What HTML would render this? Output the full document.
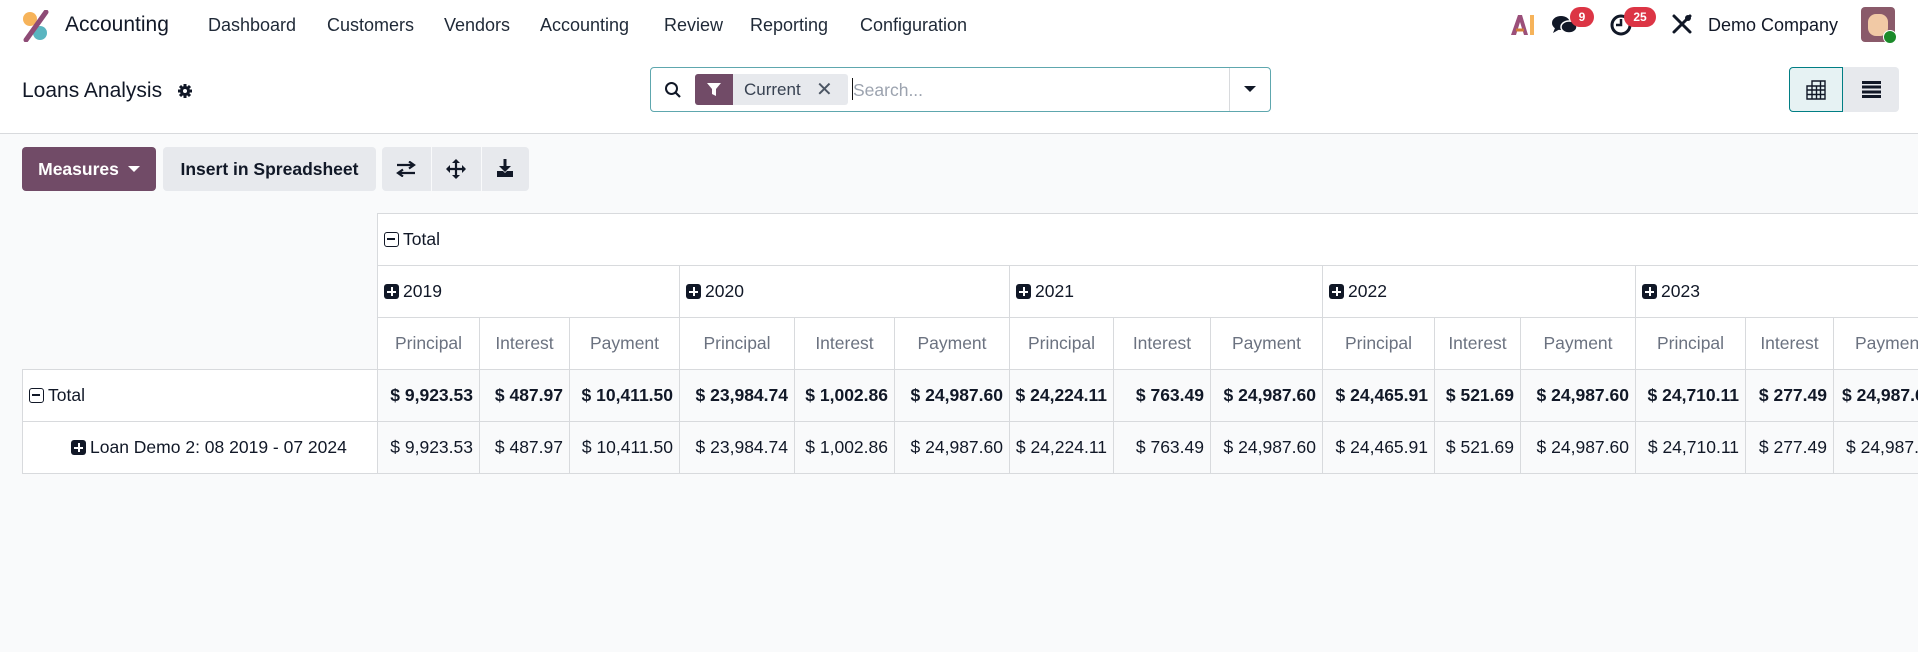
<!DOCTYPE html>
<html><head><meta charset="utf-8">
<style>
*{box-sizing:border-box;margin:0;padding:0}
body{width:1918px;height:652px;overflow:hidden;background:#f9fafb;font-family:"Liberation Sans",sans-serif;color:#111827;font-size:17.5px;position:relative}
.top{position:absolute;left:0;top:0;width:1918px;height:134px;background:#fff;border-bottom:1px solid #d8dadd}
.a{position:absolute;white-space:nowrap}
.nav{top:15px;font-size:18px;color:#1f2937}
.btn{position:absolute;border-radius:4px;background:#e7e9ed;display:flex;align-items:center;justify-content:center;font-weight:bold;font-size:17.5px}
table{position:absolute;left:22px;top:213px;border-collapse:collapse;table-layout:fixed;width:1920px}
td,th{border:1px solid #d8dadd;height:52px;white-space:nowrap;overflow:hidden;font-weight:normal;font-size:17.5px}
th{background:#fff;text-align:left;padding-left:6px}
th.m{text-align:center;color:#6b7280;padding:0}
td{text-align:right;padding-right:6px;background:#f9fafb}
tr.t td{font-weight:bold}
td.l{background:#fff;text-align:left;padding-left:6px;font-weight:normal!important}
.pl{display:inline-block;width:15px;height:15px;background:#111827;border-radius:3px;vertical-align:-2px;margin-right:4px;position:relative}
.pl:before{content:"";position:absolute;left:3px;top:6.5px;width:9px;height:2px;background:#fff}
.pl:after{content:"";position:absolute;left:6.5px;top:3px;width:2px;height:9px;background:#fff}
.mi{display:inline-block;width:15px;height:15px;border:1.5px solid #111827;border-radius:3px;vertical-align:-2px;margin-right:4px;position:relative}
.mi:before{content:"";position:absolute;left:2px;top:5.3px;width:8px;height:1.5px;background:#111827}
.badge{position:absolute;background:#dc3545;color:#fff;font-size:12px;font-weight:bold;border-radius:10px;height:20px;line-height:20px;text-align:center}
</style></head><body>
<div class="top"></div>
<svg class="a" style="left:20px;top:10px" width="32" height="32" viewBox="0 0 32 32">
<circle cx="10" cy="9" r="7" fill="#f6b35a"/><circle cx="20" cy="23" r="7" fill="#5ab5c0"/>
<path d="M6 30 L26 2" stroke="#8e4b76" stroke-width="5" stroke-linecap="round"/></svg>
<div class="a" style="left:65px;top:13px;font-size:21px;color:#111827">Accounting</div>
<div class="a nav" style="left:208px">Dashboard</div>
<div class="a nav" style="left:327px">Customers</div>
<div class="a nav" style="left:444px">Vendors</div>
<div class="a nav" style="left:540px">Accounting</div>
<div class="a nav" style="left:664px">Review</div>
<div class="a nav" style="left:750px">Reporting</div>
<div class="a nav" style="left:860px">Configuration</div>
<svg class="a" style="left:1510px;top:14px" width="26" height="22" viewBox="0 0 26 22"><path d="M1 21 L8 1 L12 1 L18 21 L14 21 L10 8 L6 21Z" fill="#9b4f7a"/><path d="M6 16 H14" stroke="#d07a3a" stroke-width="3"/><rect x="20" y="1" width="4" height="20" fill="#f6b35a"/></svg>
<svg class="a" style="left:1551px;top:14px" width="28" height="22" viewBox="0 0 28 22"><ellipse cx="10" cy="9" rx="9" ry="7" fill="#111827"/><path d="M4 14 L2 19 L9 15Z" fill="#111827"/><ellipse cx="18" cy="13" rx="8" ry="6" fill="#111827" stroke="#fff" stroke-width="1.5"/></svg>
<div class="badge" style="left:1570px;top:7px;width:24px">9</div>
<svg class="a" style="left:1609px;top:13px" width="24" height="24" viewBox="0 0 24 24"><circle cx="12" cy="12" r="9" fill="none" stroke="#111827" stroke-width="3"/><path d="M12 6 V12 H7" stroke="#111827" stroke-width="2.5" fill="none"/></svg>
<div class="badge" style="left:1624px;top:7px;width:32px">25</div>
<svg class="a" style="left:1671px;top:13px" width="22" height="22" viewBox="0 0 22 22"><path d="M3 19 L19 3 M3 3 L19 19" stroke="#111827" stroke-width="3" stroke-linecap="round"/><circle cx="17" cy="5" r="3" fill="#111827"/></svg>
<div class="a" style="left:1708px;top:15px;font-size:18px">Demo Company</div>
<div class="a" style="left:1861px;top:7px;width:34px;height:35px;border-radius:4px;background:#8a5a6a"></div>
<div class="a" style="left:1868px;top:14px;width:20px;height:22px;border-radius:8px;background:#f1c9a5"></div>
<div class="a" style="left:1883px;top:30px;width:14px;height:14px;border-radius:50%;background:#1b8a2a;border:1.5px solid #fff"></div>
<div class="a" style="left:22px;top:79px;font-size:21px">Loans Analysis</div>
<svg class="a" style="left:177px;top:83px" width="16" height="16" viewBox="0 0 16 16"><circle cx="8" cy="8" r="5" fill="#111827"/><path d="M8 1V15M1 8H15M3 3L13 13M13 3L3 13" stroke="#111827" stroke-width="3"/><circle cx="8" cy="8" r="2" fill="#fff"/></svg>
<div class="a" style="left:650px;top:67px;width:621px;height:45px;border:1px solid #5ea7ae;border-radius:4px;background:#fff"></div>
<svg class="a" style="left:664px;top:81px" width="18" height="18" viewBox="0 0 18 18"><circle cx="7.5" cy="7.5" r="5.5" fill="none" stroke="#111827" stroke-width="2"/><path d="M11.5 11.5 L16 16" stroke="#111827" stroke-width="2.2"/></svg>
<div class="a" style="left:695px;top:74px;width:153px;height:31px;background:#e7e9ed;border-radius:3px"></div>
<div class="a" style="left:695px;top:74px;width:38px;height:31px;background:#714b67;border-radius:3px 0 0 3px"></div>
<svg class="a" style="left:706px;top:82px" width="16" height="15" viewBox="0 0 16 15"><path d="M1 1 H15 L10 7 V14 L6 12 V7Z" fill="#fff"/></svg>
<div class="a" style="left:744px;top:80px;font-size:17px;color:#374151">Current</div>
<div class="a" style="left:816px;top:77px;font-size:20px;color:#4b5563">✕</div>
<div class="a" style="left:852px;top:78px;width:1px;height:22px;background:#111"></div>
<div class="a" style="left:853px;top:80px;font-size:17.5px;color:#9ca3af">Search...</div>
<div class="a" style="left:1229px;top:68px;width:1px;height:43px;background:#d8dadd"></div>
<div class="a" style="left:1244px;top:86px;border-left:6px solid transparent;border-right:6px solid transparent;border-top:6px solid #111827"></div>
<div class="a" style="left:1789px;top:67px;width:54px;height:45px;background:#e6f2f3;border:1px solid #017e84;border-radius:4px 0 0 4px"></div>
<svg class="a" style="left:1806px;top:80px" width="20" height="20" viewBox="0 0 20 20"><path d="M6 1H19V19H1V6H6Z M6 1V19 M1 10H19 M1 14.5H19 M10.5 6V19 M14.5 1V19 M6 6H19" fill="none" stroke="#111827" stroke-width="1.4"/></svg>
<div class="a" style="left:1843px;top:67px;width:56px;height:45px;background:#e7e9ed;border-radius:0 4px 4px 0"></div>
<div class="a" style="left:1862px;top:81px;width:19px;height:17px;background:repeating-linear-gradient(#111827 0 3px,#e7e9ed 3px 4.7px)"></div>
<div class="btn" style="left:22px;top:147px;width:134px;height:44px;background:#714b67;color:#fff">Measures <span style="margin-left:9px;border-left:6px solid transparent;border-right:6px solid transparent;border-top:6px solid #fff;width:0;height:0"></span></div>
<div class="btn" style="left:163px;top:147px;width:213px;height:44px">Insert in Spreadsheet</div>
<div class="btn" style="left:382px;top:147px;width:147px;height:44px"></div>
<div class="a" style="left:431px;top:147px;width:1px;height:44px;background:#f9fafb"></div>
<div class="a" style="left:481px;top:147px;width:1px;height:44px;background:#f9fafb"></div>
<svg class="a" style="left:396px;top:161px" width="20" height="16" viewBox="0 0 20 16"><path d="M1 4H17M13 0.5L18 4L13 7.5M19 12H3M7 8.5L2 12L7 15.5" fill="none" stroke="#111827" stroke-width="2.2"/></svg>
<svg class="a" style="left:446px;top:159px" width="20" height="20" viewBox="0 0 20 20"><path d="M10 1V19M1 10H19" stroke="#111827" stroke-width="2.2"/><path d="M10 0L6 4H14ZM10 20L6 16H14ZM0 10L4 6V14ZM20 10L16 6V14Z" fill="#111827"/></svg>
<svg class="a" style="left:496px;top:159px" width="18" height="19" viewBox="0 0 18 19"><path d="M9 0V9" stroke="#111827" stroke-width="3"/><path d="M3 7H15L9 13Z" fill="#111827"/><path d="M1 12H7L9 14L11 12H17V18H1Z" fill="#111827"/></svg>
<table>
<colgroup><col style="width:355px"><col style="width:102px"><col style="width:90px"><col style="width:110px"><col style="width:115px"><col style="width:100px"><col style="width:115px"><col style="width:104px"><col style="width:97px"><col style="width:112px"><col style="width:112px"><col style="width:86px"><col style="width:115px"><col style="width:110px"><col style="width:88px"><col style="width:113px"></colgroup>
<tr><th rowspan="3" style="background:transparent;border:none;border-bottom:1px solid #d8dadd"></th><th colspan="15"><span class="mi"></span>Total</th></tr>
<tr><th colspan="3"><span class="pl"></span>2019</th><th colspan="3"><span class="pl"></span>2020</th><th colspan="3"><span class="pl"></span>2021</th><th colspan="3"><span class="pl"></span>2022</th><th colspan="3"><span class="pl"></span>2023</th></tr>
<tr><th class="m">Principal</th><th class="m">Interest</th><th class="m">Payment</th><th class="m">Principal</th><th class="m">Interest</th><th class="m">Payment</th><th class="m">Principal</th><th class="m">Interest</th><th class="m">Payment</th><th class="m">Principal</th><th class="m">Interest</th><th class="m">Payment</th><th class="m">Principal</th><th class="m">Interest</th><th class="m" style="text-align:left;padding-left:21px">Payment</th></tr>
<tr class="t"><td class="l"><span class="mi"></span>Total</td><td>$ 9,923.53</td><td>$ 487.97</td><td>$ 10,411.50</td><td>$ 23,984.74</td><td>$ 1,002.86</td><td>$ 24,987.60</td><td>$ 24,224.11</td><td>$ 763.49</td><td>$ 24,987.60</td><td>$ 24,465.91</td><td>$ 521.69</td><td>$ 24,987.60</td><td>$ 24,710.11</td><td>$ 277.49</td><td style="text-align:left;padding-left:8px">$ 24,987.60</td></tr>
<tr><td class="l" style="padding-left:48px"><span class="pl"></span>Loan Demo 2: 08 2019 - 07 2024</td><td>$ 9,923.53</td><td>$ 487.97</td><td>$ 10,411.50</td><td>$ 23,984.74</td><td>$ 1,002.86</td><td>$ 24,987.60</td><td>$ 24,224.11</td><td>$ 763.49</td><td>$ 24,987.60</td><td>$ 24,465.91</td><td>$ 521.69</td><td>$ 24,987.60</td><td>$ 24,710.11</td><td>$ 277.49</td><td style="text-align:left;padding-left:12px">$ 24,987.60</td></tr>
</table>
</body></html>
